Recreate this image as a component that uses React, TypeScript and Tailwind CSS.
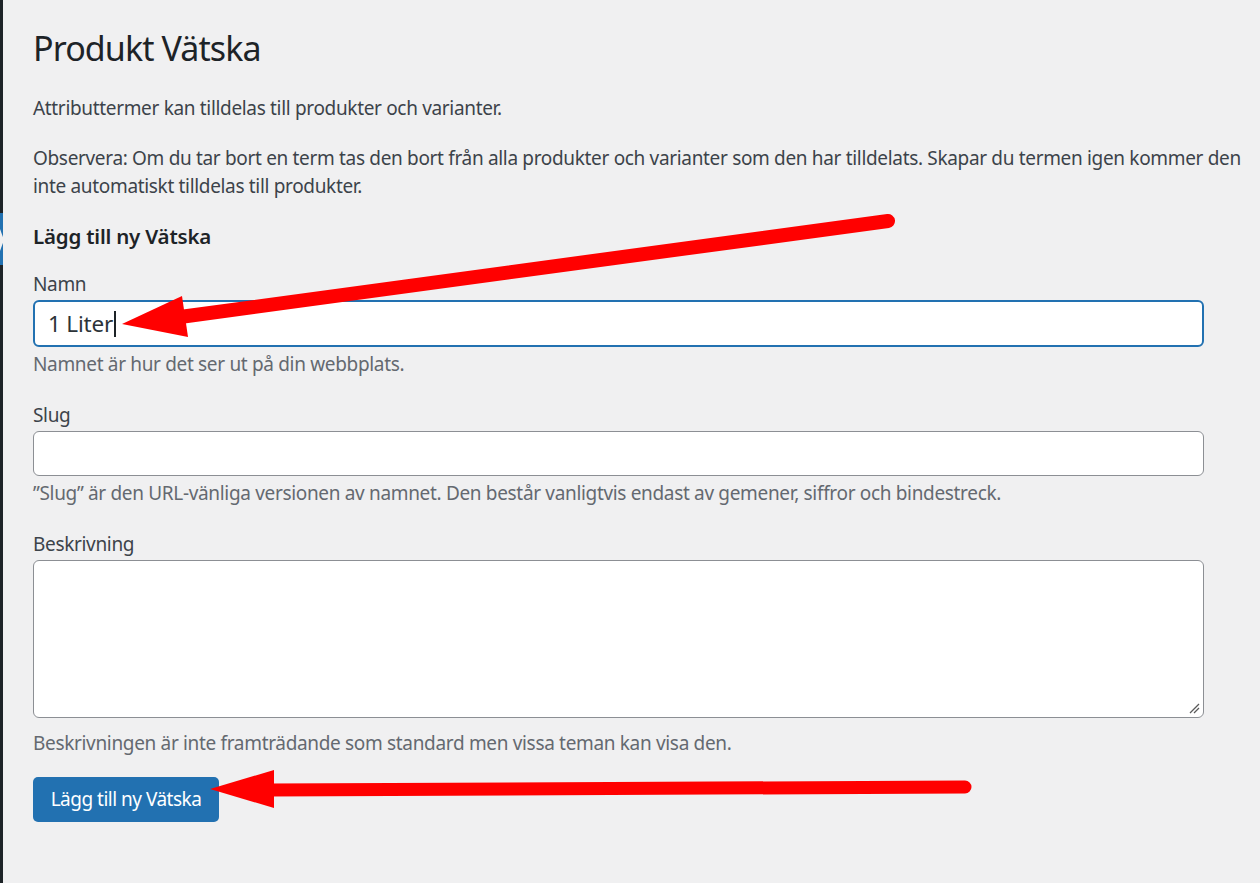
import React from 'react'

const font = { fontFamily: '"Noto Sans", "Open Sans", "Liberation Sans", sans-serif' }

function Field({ label, children, hint, gap = 'mt-[3px]' }: { label: string; children: React.ReactNode; hint: string; gap?: string }) {
  return (
    <div>
      <label className="block text-[19px] leading-[28px] text-[#3c434a]">{label}</label>
      <div className="mt-[2px]">{children}</div>
      <p className={`${gap} text-[19px] leading-[28px] text-[#646970]`}>{hint}</p>
    </div>
  )
}

export default function App() {
  return (
    <div className="relative flex min-h-[883px] w-full bg-[#f0f0f1]" style={font}>
      {/* admin menu edge */}
      <div className="flex w-[3px] shrink-0 flex-col bg-[#1d2327]">
        <div className="h-[213px]" />
        <div className="relative h-[52px] bg-[#2271b1]">
          <div className="absolute left-0 top-[16px] h-0 w-0 border-y-[11px] border-l-[4px] border-y-transparent border-l-[#f0f0f1]" />
        </div>
      </div>

      <main className="flex-1 pl-[30px] pr-[12px] pt-[26px] tracking-[-0.33px]">
        <h1 className="text-[34px] font-normal leading-[45px] tracking-[-0.9px] text-[#1d2327]">Produkt Vätska</h1>

        <p className="mt-[23px] text-[19px] leading-[28px] text-[#3c434a]">
          Attributtermer kan tilldelas till produkter och varianter.
        </p>
        <p className="mt-[22px] text-[19px] leading-[28px] text-[#3c434a]">
          Observera: Om du tar bort en term tas den bort från alla produkter och varianter som den har tilldelats. Skapar du termen igen kommer den inte automatiskt tilldelas till produkter.
        </p>

        <h2 className="mt-[22px] text-[20.5px] font-semibold leading-[28px] tracking-[-0.2px] text-[#1d2327]">Lägg till ny Vätska</h2>

        <div className="mt-[20px] w-[1171px]">
          <Field label="Namn" hint="Namnet är hur det ser ut på din webbplats.">
            <div className="flex h-[47px] items-center rounded-[6px] border-2 border-[#2271b1] bg-white px-[13px] text-[22.5px] tracking-[-0.2px] text-[#2c3338]">
              <span>1 Liter</span>
              <span className="ml-[1px] h-[26px] w-[1.5px] bg-[#1d2327]" />
            </div>
          </Field>

          <div className="mt-[23px]">
            <Field label="Slug" hint="”Slug” är den URL-vänliga versionen av namnet. Den består vanligtvis endast av gemener, siffror och bindestreck.">
              <div className="h-[45px] rounded-[6px] border border-[#8c8f94] bg-white" />
            </Field>
          </div>

          <div className="mt-[23px]">
            <Field label="Beskrivning" hint="Beskrivningen är inte framträdande som standard men vissa teman kan visa den." gap="mt-[11px]">
              <div className="relative h-[158px] rounded-[6px] border border-[#8c8f94] bg-white">
                <svg className="absolute bottom-[3px] right-[3px]" width="11" height="11" viewBox="0 0 11 11">
                  <path d="M1 10 L10 1 M5 10 L10 5" stroke="#5a5a5a" strokeWidth="1.3" />
                </svg>
              </div>
            </Field>
          </div>
        </div>

        <button className="mt-[20px] h-[45px] w-[186px] rounded-[5px] bg-[#2271b1] text-[19px] tracking-[-0.5px] text-white">
          Lägg till ny Vätska
        </button>
      </main>

      {/* annotation arrows */}
      <svg className="pointer-events-none absolute left-0 top-0" width="1260" height="883">
        <line x1="888" y1="221" x2="180" y2="317" stroke="#ff0000" strokeWidth="14" strokeLinecap="round" />
        <polygon points="122,324 182,296 188,337" fill="#ff0000" />
        <line x1="965" y1="787" x2="270" y2="790" stroke="#ff0000" strokeWidth="13" strokeLinecap="round" />
        <polygon points="210,789 274,770 274,808" fill="#ff0000" />
      </svg>
    </div>
  )
}
